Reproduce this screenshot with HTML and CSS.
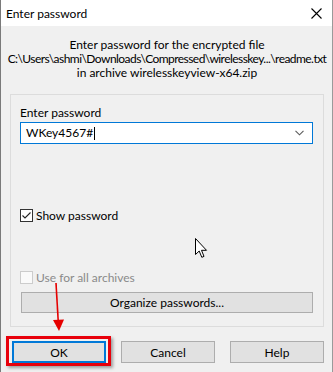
FILE: index.html
```html
<!DOCTYPE html>
<html>
<head>
<meta charset="utf-8">
<link rel="stylesheet" href="styles.css">
</head>
<body>
<div class="window">
  <div class="titlebar">
    <span class="title">Enter password</span>
    <svg class="close" width="11" height="11" viewBox="0 0 11 11"><path d="M0.5 0.5 L10.5 10.5 M10.5 0.5 L0.5 10.5" stroke="#000" stroke-width="1.1" fill="none"/></svg>
  </div>
  <div class="body">
    <div class="info">
      <div>Enter password for the encrypted file</div>
      <div class="path">C:\Users\ashmi\Downloads\Compressed\wirelesskey...\readme.txt</div>
      <div>in archive wirelesskeyview-x64.zip</div>
    </div>
    <div class="group">
      <div class="label">Enter password</div>
      <div class="combo">
        <span class="value">WKey4567#</span><span class="caret"></span>
        <svg class="chev" width="9" height="6" viewBox="0 0 9 6"><path d="M0.5 0.8 L4.5 4.8 L8.5 0.8" stroke="#5a5a5a" stroke-width="1.1" fill="none"/></svg>
      </div>
      <label class="check show">
        <span class="box checked"><svg width="11" height="11" viewBox="0 0 11 11"><path d="M1.5 5.5 L4 8 L9.5 2.5" stroke="#222" stroke-width="1.1" fill="none"/></svg></span>
        <span>Show password</span>
      </label>
      <label class="check disabled">
        <span class="box"></span>
        <span>Use for all archives</span>
      </label>
      <div class="btn wide">Organize passwords...</div>
    </div>
    <div class="buttons">
      <div class="btn default">OK</div>
      <div class="btn">Cancel</div>
      <div class="btn">Help</div>
    </div>
  </div>
  <div class="highlight"></div>
  <svg class="arrow" width="20" height="54" viewBox="0 0 20 54"><path d="M8 1 L10.5 44" stroke="#e60000" stroke-width="1.6" fill="none"/><path d="M5 38 L16 37.5 L11 49 Z" fill="#e60000"/></svg>
  <svg class="cursor" width="13" height="21" viewBox="0 0 13 21"><path d="M0.5 0.5 L0.5 16.5 L4.2 13 L6.8 19.3 L9 18.4 L6.5 12.3 L11.5 12.3 Z" fill="#fff" stroke="#000" stroke-width="1" stroke-linejoin="round"/></svg>
</div>
</body>
</html>
```
FILE: styles.css
```css
* { box-sizing: border-box; }
html, body { margin: 0; padding: 0; }
body {
  width: 333px;
  height: 372px;
  overflow: hidden;
  background: #f0f0f0;
  font-family: "Lato", "Noto Sans", sans-serif;
  font-size: 12px;
  color: #000;
}
.window {
  position: relative;
  width: 333px;
  height: 372px;
  background: #f0f0f0;
  border-left: 1px solid #7a7a7a;
  border-right: 1px solid #9a9a9a;
  display: flex;
  flex-direction: column;
}
.titlebar {
  height: 26px;
  flex: none;
  background: #fff;
  display: flex;
  align-items: center;
  justify-content: space-between;
  padding: 0 10px 0 5px;
}
.close { display: block; }
.body {
  flex: 1;
  display: flex;
  flex-direction: column;
  padding: 12px 8px 0 9px;
}
.info {
  text-align: center;
  line-height: 14px;
  white-space: nowrap;
}
.path {
  letter-spacing: -0.55px;
  margin: 0 -4px;
}
.group {
  margin-top: 14px;
  height: 233px;
  border: 1px solid #dcdcdc;
  padding: 11px 10px 0 9px;
  display: flex;
  flex-direction: column;
}
.label { line-height: 14px; }
.combo {
  margin-top: 2px;
  height: 22px;
  border: 1px solid #0078d7;
  background: #fff;
  display: flex;
  align-items: center;
  padding: 0 5px 0 5px;
}
.value { line-height: 14px; }
.caret {
  width: 1px;
  height: 13px;
  background: #000;
  margin-left: 1px;
}
.chev { margin-left: auto; margin-right: 3px; }
.check {
  display: flex;
  align-items: center;
  height: 14px;
  gap: 3px;
}
.check.show { margin-top: 64px; }
.check.disabled { margin-top: 48px; color: #8a8a8a; }
.box {
  width: 13px;
  height: 13px;
  border: 1px solid #333;
  background: #fff;
  display: flex;
  align-items: center;
  justify-content: center;
}
.check.disabled .box { border-color: #cccccc; background: #fafafa; }
.btn {
  height: 22px;
  background: #e1e1e1;
  border: 1px solid #adadad;
  display: flex;
  align-items: center;
  justify-content: center;
  flex: none;
}
.btn.wide { margin-top: 8px; margin-left: 1px; height: 21px; }
.buttons {
  margin-top: 14px;
  display: flex;
  justify-content: space-between;
  padding: 0 0 0 2px;
}
.buttons .btn { width: 94px; }
.btn.default { border: 2px solid #0078d7; }
.highlight {
  position: absolute;
  left: 5px;
  top: 336px;
  width: 105px;
  height: 30px;
  border: 3px solid #e8000b;
  box-shadow: 2px 2px 3px rgba(0,0,0,0.35);
}
.arrow { position: absolute; left: 47px; top: 282px; }
.cursor { position: absolute; left: 194px; top: 238px; }
```
